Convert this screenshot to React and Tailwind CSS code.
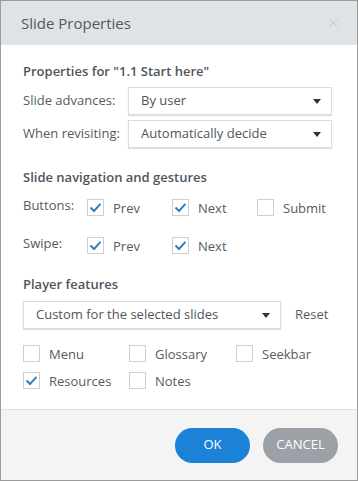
import React from "react";

const font = { fontFamily: '"Open Sans", "Noto Sans", sans-serif' };

function Check({ checked }) {
  return (
    <div className="w-[17px] h-[17px] border border-[#cdd0d2] bg-white flex items-center justify-center shrink-0">
      {checked && (
        <svg width="13" height="11" viewBox="0 0 13 11">
          <path d="M1.5 5.5 L5 9 L11.5 1.8" fill="none" stroke="#2f7fc1" strokeWidth="2" />
        </svg>
      )}
    </div>
  );
}

function CB({ checked, label, w }) {
  return (
    <div className={`flex items-center gap-[9px] ${w}`}>
      <Check checked={checked} />
      <span className="text-[13px] text-[#555b60] leading-none pt-[2px]">{label}</span>
    </div>
  );
}

function Select({ value, w }) {
  return (
    <div className={`h-[28px] ${w} border border-[#dcdcdc] shadow-[0_1px_1px_rgba(0,0,0,0.12)] flex items-center justify-between pl-[12px] pr-[10px] bg-white`}>
      <span className="text-[13px] text-[#4f555a]">{value}</span>
      <svg width="8" height="5" viewBox="0 0 8 5">
        <path d="M0 0 H8 L4 5 Z" fill="#333" />
      </svg>
    </div>
  );
}

export default function App() {
  return (
    <div style={font} className="w-[358px] h-[481px] border border-[#9c9c9c] flex flex-col bg-white overflow-hidden">
      <div className="h-[44px] bg-[#dfe3e6] flex items-center justify-between pl-[20px] pr-[18px] shrink-0">
        <span className="text-[15px] text-[#4f5962]">Slide Properties</span>
        <span className="text-[20px] font-light text-[#c8cdd0] leading-none">×</span>
      </div>
      <div className="flex-1 flex flex-col pl-[22px] pr-[25px] pt-[17px]">
        <div className="text-[13px] font-semibold text-[#4f555a] h-[18px] leading-[18px]">Properties for "1.1 Start here"</div>
        <div className="flex items-center mt-[7px]">
          <span className="w-[105px] text-[13px] text-[#555b60]">Slide advances:</span>
          <Select value="By user" w="w-[204px]" />
        </div>
        <div className="flex items-center mt-[5px]">
          <span className="w-[105px] text-[13px] text-[#555b60]">When revisiting:</span>
          <Select value="Automatically decide" w="w-[204px]" />
        </div>
        <div className="text-[13px] font-semibold text-[#4f555a] h-[18px] leading-[18px] mt-[20px]">Slide navigation and gestures</div>
        <div className="flex items-center mt-[13px]">
          <span className="w-[64px] text-[13px] text-[#555b60] -mt-[4px]">Buttons:</span>
          <CB checked label="Prev" w="w-[85px]" />
          <CB checked label="Next" w="w-[85px]" />
          <CB label="Submit" w="" />
        </div>
        <div className="flex items-center mt-[21px]">
          <span className="w-[64px] text-[13px] text-[#555b60] -mt-[4px]">Swipe:</span>
          <CB checked label="Prev" w="w-[85px]" />
          <CB checked label="Next" w="w-[85px]" />
        </div>
        <div className="text-[13px] font-semibold text-[#4f555a] h-[18px] leading-[18px] mt-[21px]">Player features</div>
        <div className="flex items-center mt-[8px]">
          <Select value="Custom for the selected slides" w="w-[258px]" />
          <span className="ml-[14px] text-[13px] text-[#555b60]">Reset</span>
        </div>
        <div className="flex items-center mt-[16px]">
          <CB label="Menu" w="w-[106px]" />
          <CB label="Glossary" w="w-[107px]" />
          <CB label="Seekbar" w="" />
        </div>
        <div className="flex items-center mt-[10px]">
          <CB checked label="Resources" w="w-[106px]" />
          <CB label="Notes" w="" />
        </div>
      </div>
      <div className="h-[71px] bg-[#f4f4f5] border-t border-[#dfe1e4] flex items-center justify-end gap-[13px] pr-[19px] shrink-0">
        <button className="w-[75px] h-[35px] rounded-full bg-[#1b82d7] text-white text-[13px]">OK</button>
        <button className="w-[75px] h-[35px] rounded-full bg-[#9ba1a6] text-white text-[13px]">CANCEL</button>
      </div>
    </div>
  );
}
